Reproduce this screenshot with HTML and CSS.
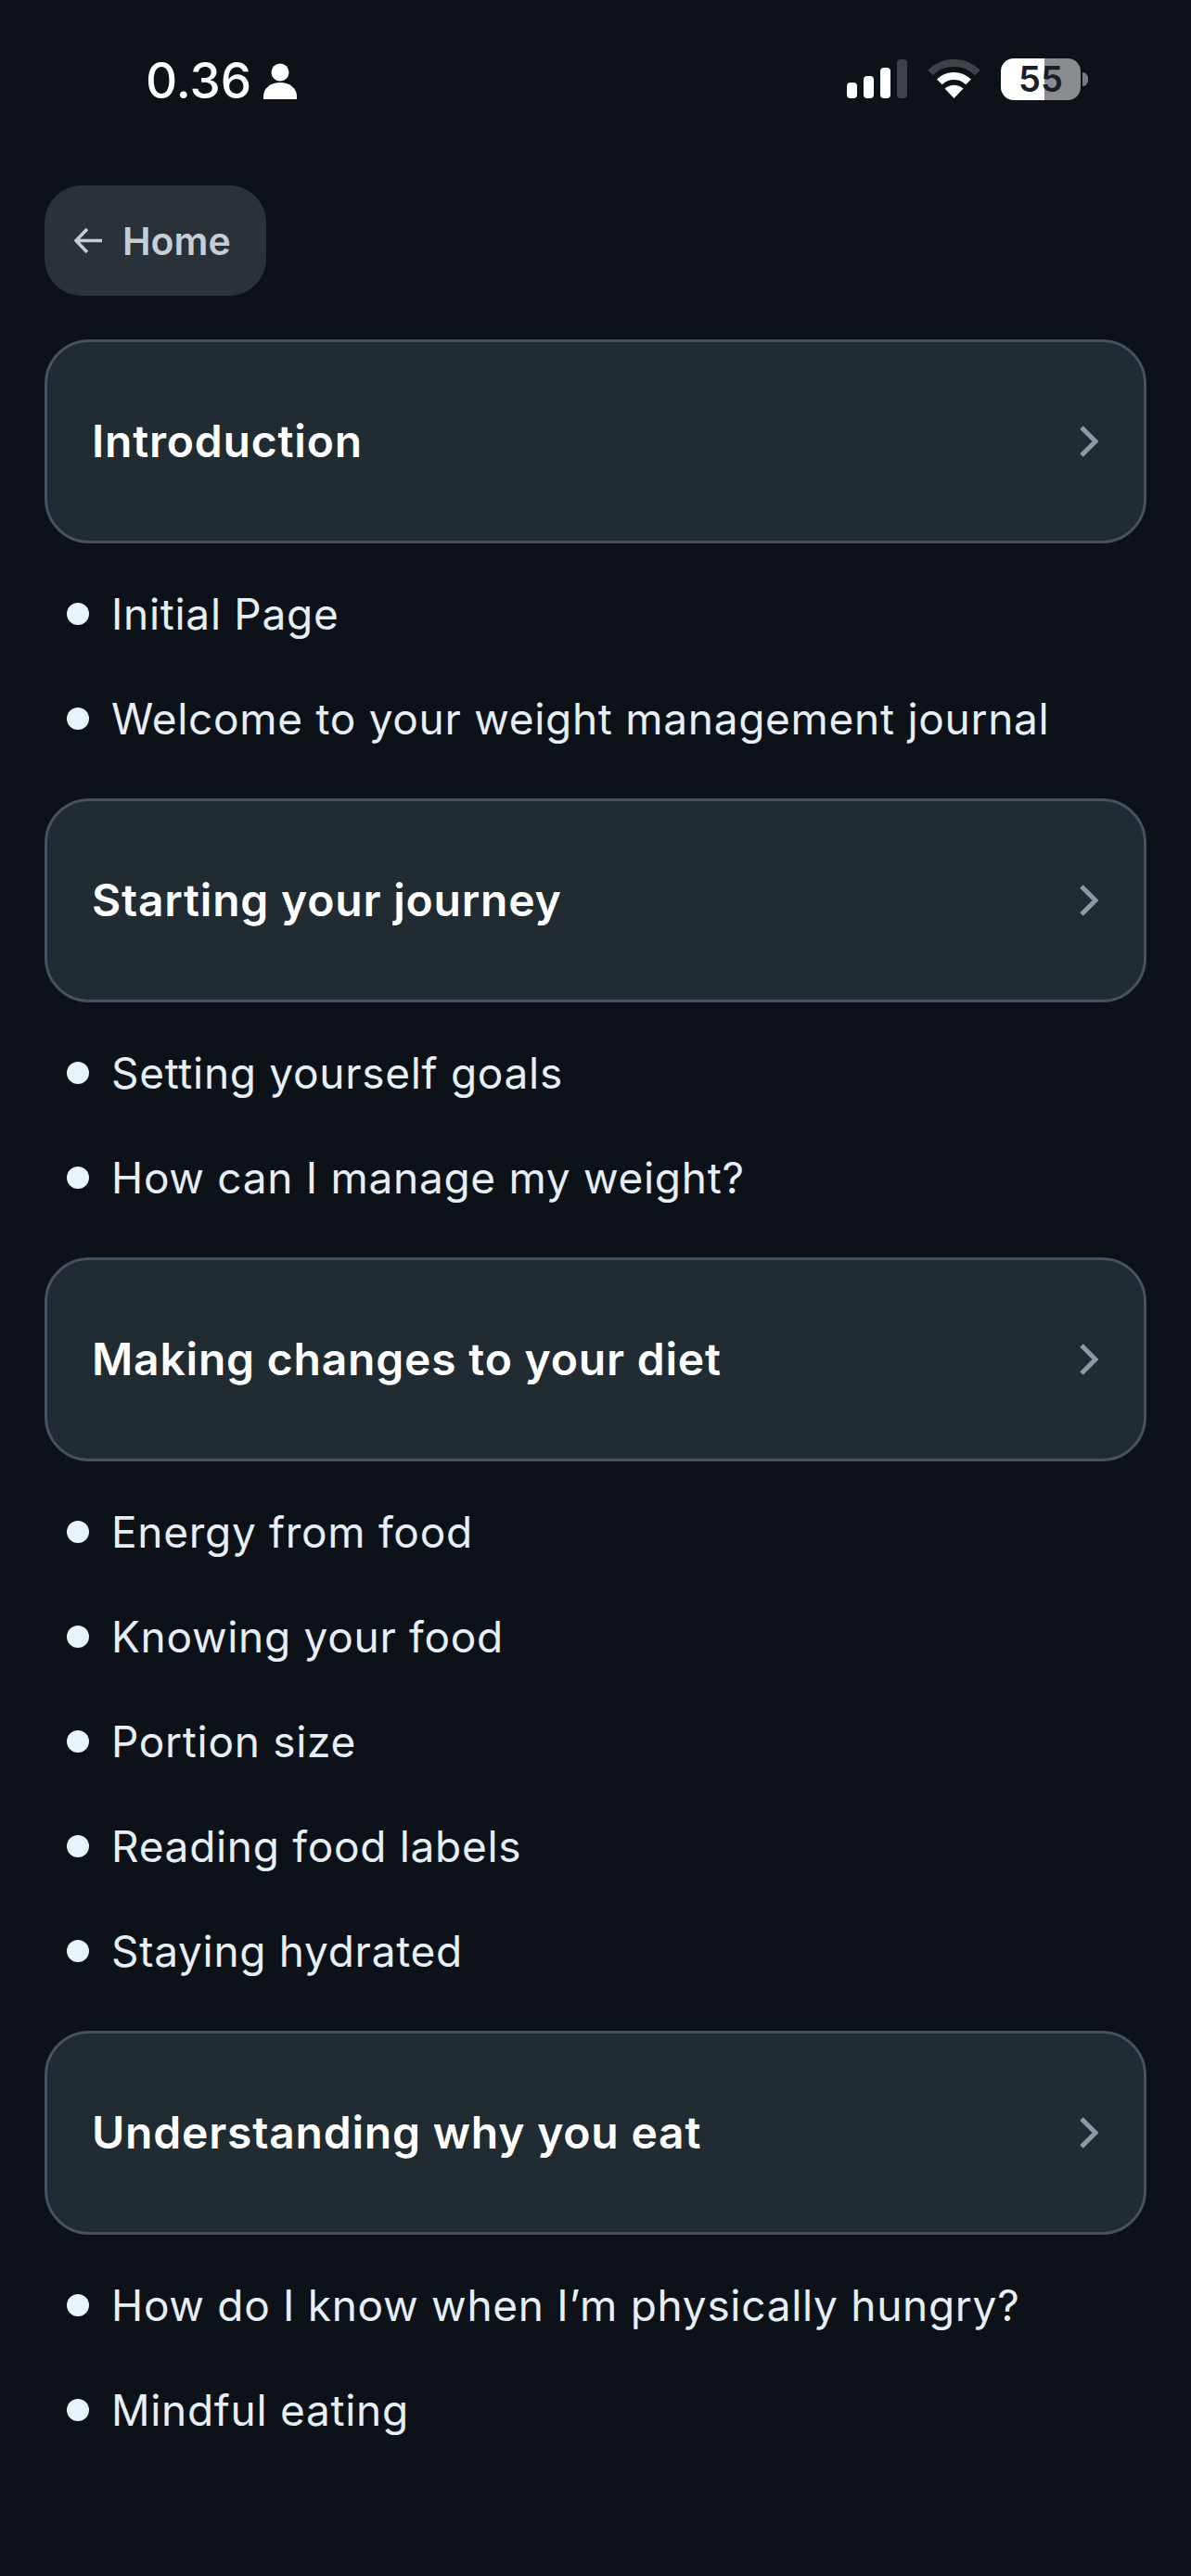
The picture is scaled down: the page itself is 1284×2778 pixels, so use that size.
FILE: index.html
```html
<!DOCTYPE html>
<html>
    <head>
        <meta charset="utf-8">
        <link rel="stylesheet" href="styles.css">
    </head>
    <body>
        <div class="status-bar">
            <div class="status-left">
                <span class="time">0.36</span>
                <svg class="person" viewBox="0 0 36 39"><circle cx="18" cy="10" r="9.5"/><path d="M0 39v-3C0 27 8 21 18 21s18 6 18 15v3z"/></svg>
            </div>
            <div class="status-right">
                <div class="signal">
                    <i class="bar bar1"></i>
                    <i class="bar bar2"></i>
                    <i class="bar bar3"></i>
                    <i class="bar bar4"></i>
                </div>
                <svg class="wifi" viewBox="0 0 57 42">
                    <path d="M3 14.5a36 36 0 0 1 51 0" fill="none" stroke="#3f4347" stroke-width="8"/>
                    <path d="M12.9 24.4a22 22 0 0 1 31.2 0" fill="none" stroke="#fff" stroke-width="8"/>
                    <path d="M28.5 42L18.5 31.5Q28.5 24 38.5 31.5z" fill="#fff"/>
                </svg>
                <div class="battery"><span>55</span></div>
                <i class="battery-nub"></i>
            </div>
        </div>

        <div class="home-btn">
            <svg class="arrow" viewBox="0 0 31 29"><path d="M31 14.5H3M15 2L3 14.5 15 27" fill="none" stroke="#c3ced6" stroke-width="3.5"/></svg>
            <span>Home</span>
        </div>

        <div class="menu">
            <div class="section">
                <div class="card"><span>Introduction</span><svg class="chevron" viewBox="0 0 22 36"><path d="M3 3l15 15L3 33" fill="none" stroke="#8d9aa4" stroke-width="5"/></svg></div>
                <ul>
                    <li>Initial Page</li>
                    <li>Welcome to your weight management journal</li>
                </ul>
            </div>
            <div class="section">
                <div class="card"><span>Starting your journey</span><svg class="chevron" viewBox="0 0 22 36"><path d="M3 3l15 15L3 33" fill="none" stroke="#8d9aa4" stroke-width="5"/></svg></div>
                <ul>
                    <li>Setting yourself goals</li>
                    <li>How can I manage my weight?</li>
                </ul>
            </div>
            <div class="section">
                <div class="card"><span>Making changes to your diet</span><svg class="chevron" viewBox="0 0 22 36"><path d="M3 3l15 15L3 33" fill="none" stroke="#8d9aa4" stroke-width="5"/></svg></div>
                <ul>
                    <li>Energy from food</li>
                    <li>Knowing your food</li>
                    <li>Portion size</li>
                    <li>Reading food labels</li>
                    <li>Staying hydrated</li>
                </ul>
            </div>
            <div class="section">
                <div class="card"><span>Understanding why you eat</span><svg class="chevron" viewBox="0 0 22 36"><path d="M3 3l15 15L3 33" fill="none" stroke="#8d9aa4" stroke-width="5"/></svg></div>
                <ul>
                    <li>How do I know when I’m physically hungry?</li>
                    <li>Mindful eating</li>
                </ul>
            </div>
        </div>
    </body>
</html>
```

FILE: styles.css
```css
html,
body {
    height: 100%;
}

body {
    margin: 0;
    background: #0c1218;
    color: #e6eff5;
    font-family: Inter, "Liberation Sans", sans-serif;
    overflow: hidden;
}

.status-bar {
    height: 50px;
    padding: 60px 111px 0 157px;
    display: flex;
    justify-content: space-between;
    align-items: center;
}

.status-left {
    display: flex;
    align-items: center;
    gap: 13px;
    padding-top: 4px;
}

.time {
    font-size: 53px;
    line-height: 50px;
    font-weight: 500;
    color: #fff;
}

.person {
    width: 36px;
    height: 39px;
    fill: #fff;
}

.status-right {
    display: flex;
    align-items: center;
}

.signal {
    display: flex;
    align-items: flex-end;
    gap: 7px;
    height: 42px;
    margin-right: 22px;
}

.bar {
    display: block;
    width: 11px;
    border-radius: 4px;
    background: #fff;
}

.bar1 { height: 17px; }
.bar2 { height: 24px; }
.bar3 { height: 33px; }
.bar4 { height: 42px; background: #3f4347; }

.wifi {
    width: 57px;
    height: 42px;
    margin-right: 22px;
}

.battery {
    width: 86px;
    height: 45px;
    border-radius: 14px;
    background: linear-gradient(to right, #fff 55%, #8b8c8f 55%);
    display: flex;
    align-items: center;
    justify-content: center;
    color: #1c2026;
    font-size: 38px;
    font-weight: 600;
}

.battery-nub {
    display: block;
    width: 6px;
    height: 15px;
    margin-left: 2px;
    border-radius: 0 8px 8px 0;
    background: #77797c;
}

.home-btn {
    width: 239px;
    height: 119px;
    box-sizing: border-box;
    margin: 90px 0 0 48px;
    padding-left: 31px;
    border-radius: 40px;
    background: #283238;
    display: flex;
    align-items: center;
    gap: 22px;
    color: #c3ced6;
    font-size: 41px;
    font-weight: 600;
}

.arrow {
    width: 31px;
    height: 29px;
}

.menu {
    margin: 47px 48px 0;
}

.section ul {
    list-style: none;
    margin: 0;
    padding: 20px 0 29px;
}

.section li {
    height: 113px;
    line-height: 113px;
    padding-left: 72px;
    position: relative;
    font-size: 46px;
    font-weight: 370;
    letter-spacing: 0.7px;
    white-space: nowrap;
}

.section li::before {
    content: "";
    position: absolute;
    left: 24px;
    top: 44px;
    width: 24px;
    height: 24px;
    border-radius: 50%;
    background: #e8f3fb;
}

.card {
    height: 220px;
    box-sizing: border-box;
    padding: 0 48px 2px 48px;
    border: 3px solid #46525f;
    border-radius: 48px;
    background: #212b32;
    display: flex;
    align-items: center;
    justify-content: space-between;
    color: #fff;
    font-size: 48px;
    font-weight: 600;
    letter-spacing: 0.8px;
}

.chevron {
    width: 22px;
    height: 36px;
    margin-top: 2px;
}
```
